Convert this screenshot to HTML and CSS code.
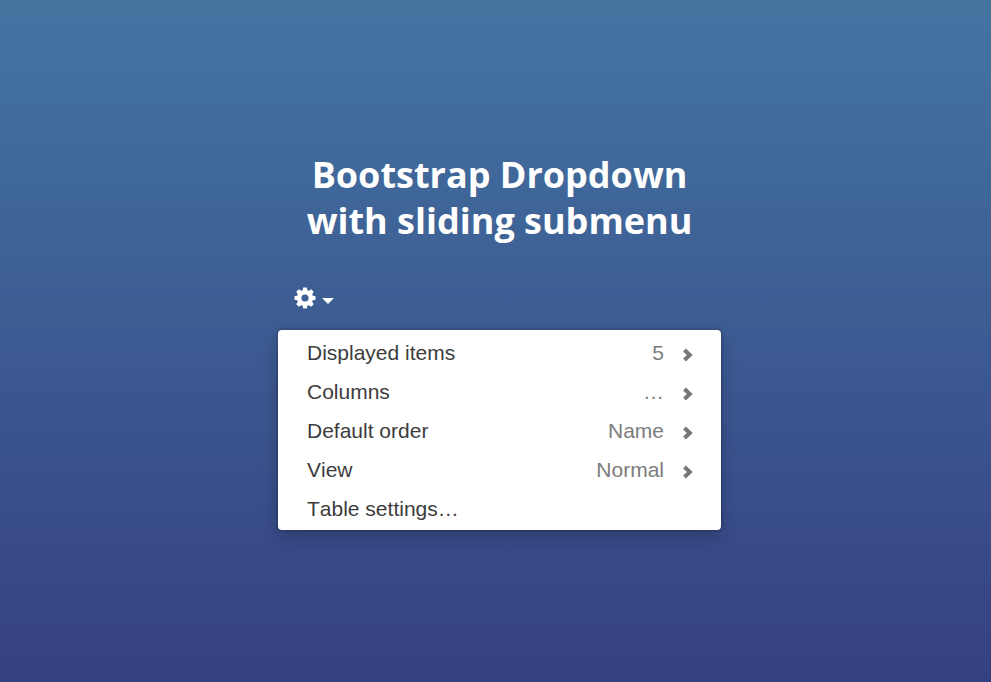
FILE: index.html
```
<!DOCTYPE html>
<html lang="en">

<head>
  <meta charset="utf-8">
  <meta name="viewport" content="width=device-width">
  <title>Bootstrap Dropdown with sliding submenu</title>
  <link rel="stylesheet" href="styles.css">
</head>

<body>
  <main class="demo">
    <h1>Bootstrap Dropdown<br>with sliding submenu</h1>
    <div class="dropdown">
      <button class="dropdown-toggle" type="button" aria-label="Settings" aria-expanded="true">
        <svg class="gear" viewBox="0 0 22 22">
          <g fill="#fff">
            <path id="tooth" d="M8.4 4L9.2 0.5H12.8L13.6 4V18L12.8 21.5H9.2L8.4 18Z"/>
            <use href="#tooth" transform="rotate(45 11 11)"/>
            <use href="#tooth" transform="rotate(90 11 11)"/>
            <use href="#tooth" transform="rotate(135 11 11)"/>
            <circle cx="11" cy="11" r="8"/>
          </g>
          <circle cx="11" cy="11" r="3.6" fill="#3e5f96"/>
        </svg>
        <span class="caret"></span>
      </button>
      <ul class="dropdown-menu">
        <li><a href="#items"><span>Displayed items</span><span class="value">5</span><svg class="chevron" viewBox="0 0 10 14"><path d="M1.5 2L6.8 7L1.5 12"/></svg></a></li>
        <li><a href="#columns"><span>Columns</span><span class="value">…</span><svg class="chevron" viewBox="0 0 10 14"><path d="M1.5 2L6.8 7L1.5 12"/></svg></a></li>
        <li><a href="#order"><span>Default order</span><span class="value">Name</span><svg class="chevron" viewBox="0 0 10 14"><path d="M1.5 2L6.8 7L1.5 12"/></svg></a></li>
        <li><a href="#view"><span>View</span><span class="value">Normal</span><svg class="chevron" viewBox="0 0 10 14"><path d="M1.5 2L6.8 7L1.5 12"/></svg></a></li>
        <li><a href="#settings"><span>Table settings…</span></a></li>
      </ul>
    </div>
  </main>
</body>

</html>
```

FILE: styles.css
```
* {
  box-sizing: border-box;
}

body {
  margin: 0;
  min-height: 100vh;
  background: linear-gradient(#4474a0, #42709f 10%, #354081);
  color: #fff;
  font-family: "Liberation Sans", Arial, sans-serif;
}

.demo {
  max-width: 451px;
  margin: 0 auto;
  padding: 152px 0 32px 8px;
}

h1 {
  margin: 0 0 31px;
  font: bold 36px/46px "Open Sans", sans-serif;
  text-align: center;
}

.dropdown-toggle {
  display: flex;
  align-items: center;
  gap: 6px;
  height: 46px;
  padding: 0 16px;
  border: 0;
  background: none;
}

.gear {
  width: 22px;
  height: 22px;
}

.caret {
  margin-top: 6px;
  border: 6px solid transparent;
  border-top-color: #fff;
  border-bottom: 0;
}

.dropdown-menu {
  margin: 9px 0 0;
  padding: 3px 0 2px;
  border-radius: 4px;
  background: #fff;
  box-shadow: 0 0 0 2px rgba(0, 0, 0, 0.1), 0 8px 18px rgba(0, 0, 0, 0.2);
  list-style: none;
}

.dropdown-menu a {
  display: flex;
  align-items: center;
  padding: 0 28px 0 29px;
  color: #3c3c3c;
  font-size: 21px;
  font-kerning: none;
  line-height: 39px;
  text-decoration: none;
}

.value {
  margin-left: auto;
  color: #7c7c7c;
}

.chevron {
  width: 10px;
  height: 14px;
  margin: 4px 0 0 19px;
  fill: none;
  stroke: #777;
  stroke-width: 4;
}
```
